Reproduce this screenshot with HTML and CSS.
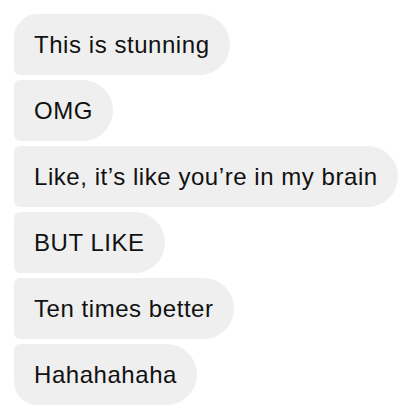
FILE: index.html
```html
<!DOCTYPE html>
<html lang="en">
<head>
    <meta charset="UTF-8">
    <meta name="viewport" content="width=device-width, initial-scale=1.0">
    <title>Messages</title>
    <link rel="stylesheet" href="styles.css">
</head>
<body>

<div class="thread">
    <div class="bubble first">This is stunning</div>
    <div class="bubble">OMG</div>
    <div class="bubble">Like, it’s like you’re in my brain</div>
    <div class="bubble">BUT LIKE</div>
    <div class="bubble">Ten times better</div>
    <div class="bubble last">Hahahahaha</div>
</div>

</body>
</html>
```

FILE: styles.css
```css
body {
    margin: 0;
    background-color: #fff;
    color: #111;
    font-family: "Liberation Sans", Arial, sans-serif;
}
.thread {
    display: flex;
    flex-direction: column;
    align-items: flex-start;
    gap: 5px;
    padding: 14px 0 0 14px;
}
.bubble {
    background-color: #efefef;
    font-size: 24px;
    letter-spacing: 0.55px;
    line-height: 61px;
    height: 61px;
    padding: 0 20px 0 20px;
    white-space: nowrap;
    border-radius: 6px 31px 31px 6px;
}
.bubble.first {
    border-top-left-radius: 24px;
}
.bubble.last {
    border-bottom-left-radius: 24px;
}
```
